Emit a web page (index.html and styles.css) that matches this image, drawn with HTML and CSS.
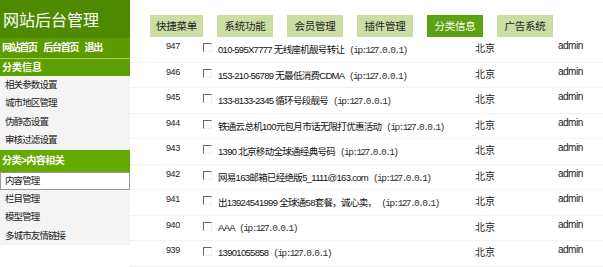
FILE: index.html
```html
<!DOCTYPE html>
<html lang="zh-CN">
<head>
    <meta charset="UTF-8">
    <title>网站后台管理</title>
    <link rel="stylesheet" href="styles.css">
</head>
<body>
    <div class="page">
        <div class="sidebar">
            <div class="logo">网站后台管理</div>
            <div class="toplinks"><a href="#">网站首页</a> <a href="#">后台首页</a> <a href="#">退出</a></div>
            <div class="group">分类信息</div>
            <ul class="menu">
                <li>相关参数设置</li>
                <li>城市地区管理</li>
                <li>伪静态设置</li>
                <li>审核过滤设置</li>
            </ul>
            <div class="group big">分类&gt;内容相关</div>
            <ul class="menu">
                <li class="on">内容管理</li>
                <li>栏目管理</li>
                <li>模型管理</li>
                <li>多城市友情链接</li>
            </ul>
        </div>
        <div class="main">
            <div class="tabs">
                <span class="tab first">快捷菜单</span>
                <span class="tab">系统功能</span>
                <span class="tab">会员管理</span>
                <span class="tab">插件管理</span>
                <span class="tab active">分类信息</span>
                <span class="tab">广告系统</span>
            </div>
            <table class="list">
                <colgroup>
                    <col class="c-id">
                    <col class="c-chk">
                    <col class="c-title">
                    <col class="c-city">
                    <col>
                </colgroup>
                <tr><td class="id">947</td><td class="chk"><span class="box"></span></td><td class="title">010-595X7777 无线座机靓号转让 <span class="ip">(ip:127.0.0.1)</span></td><td class="city">北京</td><td class="user">admin</td></tr>
                <tr><td class="id">946</td><td class="chk"><span class="box"></span></td><td class="title">153-210-56789 无最低消费CDMA <span class="ip">(ip:127.0.0.1)</span></td><td class="city">北京</td><td class="user">admin</td></tr>
                <tr><td class="id">945</td><td class="chk"><span class="box"></span></td><td class="title">133-8133-2345 循环号段靓号 <span class="ip">(ip:127.0.0.1)</span></td><td class="city">北京</td><td class="user">admin</td></tr>
                <tr><td class="id">944</td><td class="chk"><span class="box"></span></td><td class="title">铁通云总机100元包月市话无限打优惠活动 <span class="ip">(ip:127.0.0.1)</span></td><td class="city">北京</td><td class="user">admin</td></tr>
                <tr><td class="id">943</td><td class="chk"><span class="box"></span></td><td class="title">1390 北京移动全球通经典号码 <span class="ip">(ip:127.0.0.1)</span></td><td class="city">北京</td><td class="user">admin</td></tr>
                <tr><td class="id">942</td><td class="chk"><span class="box"></span></td><td class="title">网易163邮箱已经绝版5_1111@163.com <span class="ip">(ip:127.0.0.1)</span></td><td class="city">北京</td><td class="user">admin</td></tr>
                <tr><td class="id">941</td><td class="chk"><span class="box"></span></td><td class="title">出13924541999 全球通58套餐，诚心卖， <span class="ip">(ip:127.0.0.1)</span></td><td class="city">北京</td><td class="user">admin</td></tr>
                <tr><td class="id">940</td><td class="chk"><span class="box"></span></td><td class="title">AAA <span class="ip">(ip:127.0.0.1)</span></td><td class="city">北京</td><td class="user">admin</td></tr>
                <tr><td class="id">939</td><td class="chk"><span class="box"></span></td><td class="title">13901055858 <span class="ip">(ip:127.0.0.1)</span></td><td class="city">北京</td><td class="user">admin</td></tr>
            </table>
        </div>
    </div>
</body>
</html>
```
FILE: styles.css
```css
body {
    margin: 0;
    background-color: #fff;
    font-family: "Liberation Sans", "Noto Sans CJK SC", sans-serif;
    font-size: 12px;
    color: #333;
    overflow: hidden;
}
.page {
    display: flex;
    align-items: flex-start;
}

/* left menu */
.sidebar {
    width: 130px;
    flex-shrink: 0;
    background-color: #f4f4f4;
}
.logo {
    height: 38px;
    line-height: 38px;
    padding-left: 3px;
    background-color: #4d8a00;
    color: #fff;
    font-size: 16px;
    font-family: "Noto Sans CJK SC", sans-serif;
}
.toplinks {
    height: 20px;
    line-height: 20px;
    padding-left: 2px;
    background-color: #5b9b00;
    border-bottom: 1px solid #a6cf6c;
    font-size: 10px;
    font-weight: bold;
    letter-spacing: -1.3px;
    word-spacing: 5px;
}
.toplinks a {
    color: #fff;
    text-decoration: none;
}
.group {
    height: 17px;
    line-height: 17px;
    padding-left: 2px;
    background-color: #5e9f00;
    color: #fff;
    font-size: 10px;
    font-weight: bold;
}
.group.big {
    height: 22px;
    line-height: 22px;
    background-color: #66aa00;
    letter-spacing: -0.5px;
}
.menu {
    list-style: none;
    margin: 0;
    padding: 0;
}
.menu li {
    height: 18.4px;
    line-height: 18.4px;
    padding-left: 5px;
    font-size: 9.5px;
    letter-spacing: -0.9px;
    color: #222;
}
.menu li.on {
    height: 16.4px;
    line-height: 16.4px;
    padding-left: 4px;
    background-color: #fff;
    border: 1px solid #999;
}

/* right side */
.main {
    flex: 1;
    padding-top: 15px;
    background-color: #fff;
}
.tabs {
    display: flex;
    gap: 14px;
    padding-left: 20px;
    height: 22px;
}
.tab {
    width: 56px;
    height: 22px;
    line-height: 22px;
    text-align: center;
    background-color: #cbdda3;
    color: #222;
    font-size: 10.5px;
    letter-spacing: -0.3px;
}
.tab.first {
    width: 53px;
}
.tab.active {
    background-color: #5ca212;
    color: #fff;
}
.list {
    width: 100%;
    table-layout: fixed;
    border-collapse: collapse;
}
.c-id { width: 50px; }
.c-chk { width: 38px; }
.c-title { width: 257px; }
.c-city { width: 83px; }
.list td {
    height: 24.5px;
    padding: 0;
    border-bottom: 1px solid #f2f2f2;
    white-space: nowrap;
    overflow: hidden;
    vertical-align: middle;
}
.list .id {
    text-align: right;
    font-size: 9px;
    letter-spacing: -0.3px;
    vertical-align: top;
    padding-top: 4px;
    height: 20.5px;
    color: #222;
}
.list .chk {
    vertical-align: top;
    padding-left: 23px;
}
.box {
    display: block;
    width: 7px;
    height: 7px;
    margin-top: 6px;
    border-top: 1px solid #666;
    border-left: 1px solid #666;
    border-right: 1px solid #f0f0f0;
    border-bottom: 1px solid #f0f0f0;
    background-color: #fff;
}
.list .title {
    font-size: 9.5px;
    letter-spacing: -0.7px;
    color: #111;
}
.ip {
    font-family: "Liberation Mono", monospace;
    font-size: 9.5px;
    letter-spacing: -1.6px;
    color: #333;
    margin-left: 3px;
}
.list .city,
.list .user {
    font-size: 10px;
    vertical-align: top;
    padding-top: 3px;
    height: 21.5px;
    color: #222;
}
.list .user {
    letter-spacing: -0.5px;
}
```
